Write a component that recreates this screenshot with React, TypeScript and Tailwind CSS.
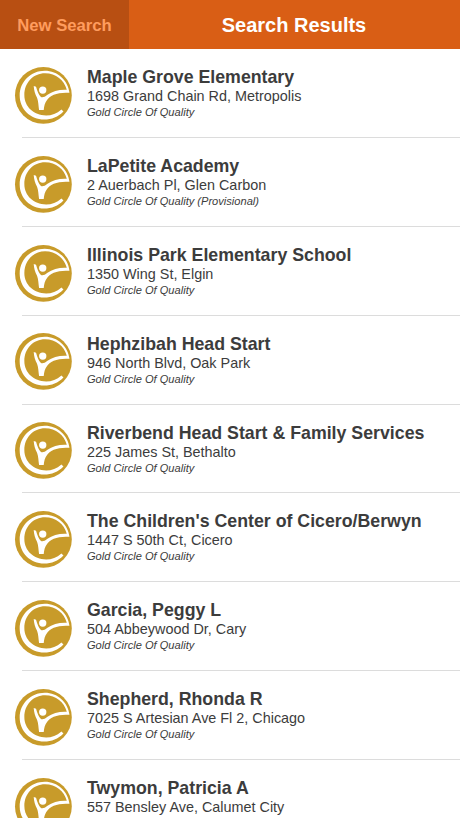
const results = [
  { name: "Maple Grove Elementary", address: "1698 Grand Chain Rd, Metropolis", rating: "Gold Circle Of Quality" },
  { name: "LaPetite Academy", address: "2 Auerbach Pl, Glen Carbon", rating: "Gold Circle Of Quality (Provisional)" },
  { name: "Illinois Park Elementary School", address: "1350 Wing St, Elgin", rating: "Gold Circle Of Quality" },
  { name: "Hephzibah Head Start", address: "946 North Blvd, Oak Park", rating: "Gold Circle Of Quality" },
  { name: "Riverbend Head Start & Family Services", address: "225 James St, Bethalto", rating: "Gold Circle Of Quality" },
  { name: "The Children's Center of Cicero/Berwyn", address: "1447 S 50th Ct, Cicero", rating: "Gold Circle Of Quality" },
  { name: "Garcia, Peggy L", address: "504 Abbeywood Dr, Cary", rating: "Gold Circle Of Quality" },
  { name: "Shepherd, Rhonda R", address: "7025 S Artesian Ave Fl 2, Chicago", rating: "Gold Circle Of Quality" },
  { name: "Twymon, Patricia A", address: "557 Bensley Ave, Calumet City", rating: "" },
];

function GoldCircle() {
  return (
    <svg viewBox="20 21 170 170" className="mt-[17.8px] ml-[14.7px] size-[56.8px] shrink-0 overflow-visible" aria-hidden="true">
      <circle cx="105" cy="106" r="85" fill="#c89b2a" />
      <g fill="#fff">
        <path d="M183 98C179 61 148 32 109 32C67 32 34 65 34 106C34 147 67 178 107 178C130 178 149 170 165 154L159 148C145 160 130 166 113 166C76 166 48 140 48 105C48 68 75 40 110 40C143 40 167 61 175 89C153 88 133 92 116 105C109 111 101 114 97 110C91 103 87 94 83 80L76 78C77 92 80 103 86 113C90 123 90 136 92 150L106 150C107 138 109 128 117 118C131 101 153 98 183 98Z" />
        <circle cx="103" cy="90" r="11" />
      </g>
    </svg>
  );
}

export default function App() {
  return (
    <div className="flex h-[818px] w-[460px] flex-col overflow-hidden bg-white font-['Liberation_Sans',Arial,sans-serif] text-[#3c3c3c]">
      <header className="flex h-[49px] shrink-0 bg-[#d95e15]">
        <button className="w-[129px] bg-[#b84f12] pt-[2px] text-[16.7px] font-bold text-[#ff9c5e]">New Search</button>
        <h1 className="flex-1 pr-[1px] text-center text-[20px] leading-[50px] font-bold text-white">Search Results</h1>
      </header>
      <ul className="shrink-0">
        {results.map((r) => (
          <li key={r.name} className="flex h-[88.9px] flex-col">
            <div className="flex min-h-0 flex-1">
              <GoldCircle />
              <div className="ml-[15.5px] pt-[18px] whitespace-nowrap">
                <h2 className="text-[17.75px] leading-[20px] font-bold">{r.name}</h2>
                <p className="text-[14.4px] leading-[18px]">{r.address}</p>
                {r.rating && <p className="text-[11.1px] leading-[14px] italic">{r.rating}</p>}
              </div>
            </div>
            <div className="ml-[22px] h-px shrink-0 bg-[#dcdcdc]" />
          </li>
        ))}
      </ul>
    </div>
  );
}
